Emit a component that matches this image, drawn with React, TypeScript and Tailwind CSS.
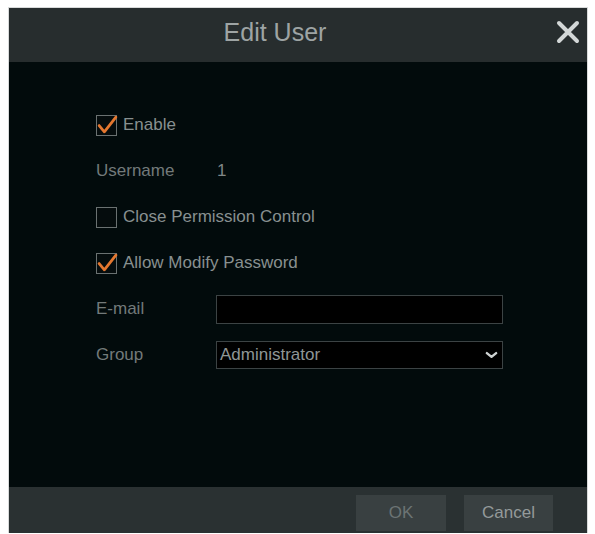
import { ReactNode } from 'react';

const FONT = { fontFamily: '"Liberation Sans", Arial, sans-serif' };

function Checkbox({ checked }: { checked: boolean }) {
  return (
    <span className="relative w-[21px] h-[21px] border border-[#6a7171] bg-[#050c0d] shrink-0">
      {checked && (
        <svg
          viewBox="0 0 21 21"
          className="absolute left-[-1px] top-[-2px] w-[22px] h-[22px]"
          fill="none"
        >
          <polyline
            points="3,11 8,17 19,3"
            stroke="#e4772f"
            strokeWidth="2.6"
            strokeLinecap="round"
            strokeLinejoin="round"
          />
        </svg>
      )}
    </span>
  );
}

function Row({ children }: { children: ReactNode }) {
  return <div className="h-[46px] flex items-center">{children}</div>;
}

function CheckRow({ checked, label }: { checked: boolean; label: string }) {
  return (
    <Row>
      <Checkbox checked={checked} />
      <span className="ml-[6px] text-[17px] text-[#889090]">{label}</span>
    </Row>
  );
}

export default function App() {
  return (
    <div className="w-full h-[534px] bg-white pt-[7px] pl-[8px]" style={FONT}>
      <div className="w-[580px] h-[526px] flex flex-col border-x border-t border-[#d8dada]">
        {/* title bar */}
        <div className="h-[54px] bg-[#272d2e] relative flex items-center justify-center">
          <span className="text-[25px] text-[#9ea4a4] mr-[46px] mt-[-4px]">Edit User</span>
          <button className="absolute right-[6px] top-[11px] w-[26px] h-[26px] flex items-center justify-center">
            <svg viewBox="0 0 24 24" className="w-[24px] h-[24px]" fill="none">
              <path d="M3 3 L21 21 M21 3 L3 21" stroke="#d3d7d7" strokeWidth="4" strokeLinecap="round" />
            </svg>
          </button>
        </div>

        {/* form */}
        <div className="flex-1 bg-[#020b0c] pt-[40px] pl-[87px]">
          <CheckRow checked label="Enable" />
          <Row>
            <span className="w-[121px] text-[17px] text-[#737a7a]">Username</span>
            <span className="text-[17px] text-[#808787]">1</span>
          </Row>
          <CheckRow checked={false} label="Close Permission Control" />
          <CheckRow checked label="Allow Modify Password" />
          <Row>
            <span className="w-[120px] text-[17px] text-[#737a7a]">E-mail</span>
            <input
              className="w-[287px] h-[29px] bg-black border border-[#3c4344] outline-none text-[17px] text-[#9aa0a0] px-[3px]"
              style={FONT}
            />
          </Row>
          <Row>
            <span className="w-[120px] text-[17px] text-[#737a7a]">Group</span>
            <div className="w-[287px] h-[28px] bg-black border border-[#3c4344] flex items-center justify-between pl-[3px] pr-[4px]">
              <span className="text-[17px] text-[#8f9696]">Administrator</span>
              <svg viewBox="0 0 14 8" className="w-[13px] h-[8px]" fill="none">
                <polyline
                  points="2,2 7,6 12,2"
                  stroke="#cdd1d1"
                  strokeWidth="2.6"
                  strokeLinecap="round"
                  strokeLinejoin="round"
                />
              </svg>
            </div>
          </Row>
        </div>

        {/* footer */}
        <div className="h-[46px] bg-[#2a3132] flex justify-end items-start pt-[8px] pr-[34px] gap-[18px]">
          <button className="w-[90px] h-[36px] bg-[#394041] text-[17px] text-[#6c7474]">OK</button>
          <button className="w-[89px] h-[36px] bg-[#394041] text-[17px] text-[#949a9a]">Cancel</button>
        </div>
      </div>
    </div>
  );
}
